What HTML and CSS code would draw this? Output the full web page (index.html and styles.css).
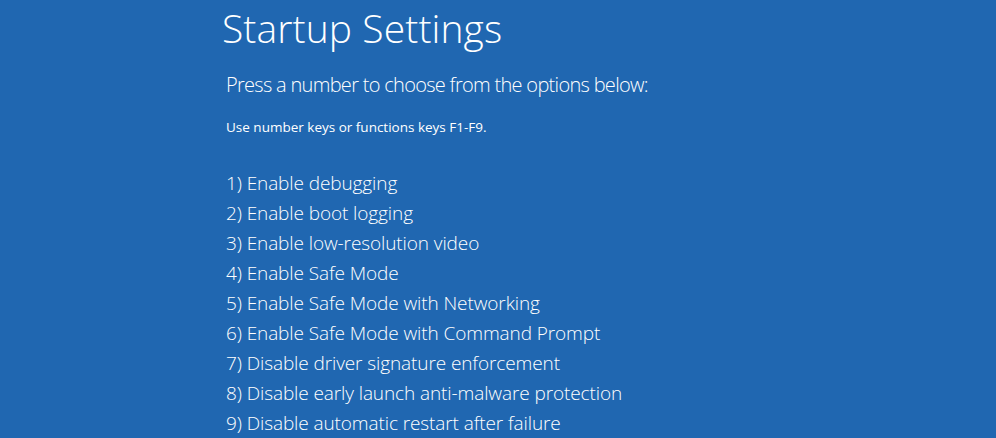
FILE: index.html
```html
<!DOCTYPE html>
<html lang="en">
<head>
    <meta charset="UTF-8">
    <title>Startup Settings</title>
    <link rel="stylesheet" href="styles.css">
</head>
<body>
<div class="screen">
    <h1>Startup Settings</h1>
    <p class="prompt">Press a number to choose from the options below:</p>
    <p class="hint">Use number keys or functions keys F1-F9.</p>
    <ol class="options">
        <li>1) Enable debugging</li>
        <li>2) Enable boot logging</li>
        <li>3) Enable low-resolution video</li>
        <li>4) Enable Safe Mode</li>
        <li>5) Enable Safe Mode with Networking</li>
        <li>6) Enable Safe Mode with Command Prompt</li>
        <li>7) Disable driver signature enforcement</li>
        <li>8) Disable early launch anti-malware protection</li>
        <li>9) Disable automatic restart after failure</li>
    </ol>
</div>
</body>
</html>
```

FILE: styles.css
```css
html, body {
    margin: 0;
    padding: 0;
    width: 100%;
    height: 100%;
    overflow: hidden;
    background-color: #2067b1;
    color: #ffffff;
    font-family: "Open Sans", "Noto Sans", sans-serif;
    font-weight: 300;
}

div.screen {
    padding: 0 0 0 222px;
}

h1 {
    margin: 0;
    padding: 4px 0 0 0;
    font-size: 39px;
    font-weight: 300;
    line-height: 48px;
    letter-spacing: 0.1px;
}

p {
    margin: 0;
}

p.prompt {
    margin: 19px 0 0 4px;
    font-size: 20px;
    line-height: 28px;
    letter-spacing: -0.7px;
}

p.hint {
    margin: 19px 0 0 4px;
    font-size: 13.5px;
    line-height: 18px;
    font-weight: 400;
}

ol.options {
    list-style: none;
    margin: 32px 0 0 4px;
    padding: 0;
    font-size: 19px;
    line-height: 30px;
    letter-spacing: -0.1px;
}
```
